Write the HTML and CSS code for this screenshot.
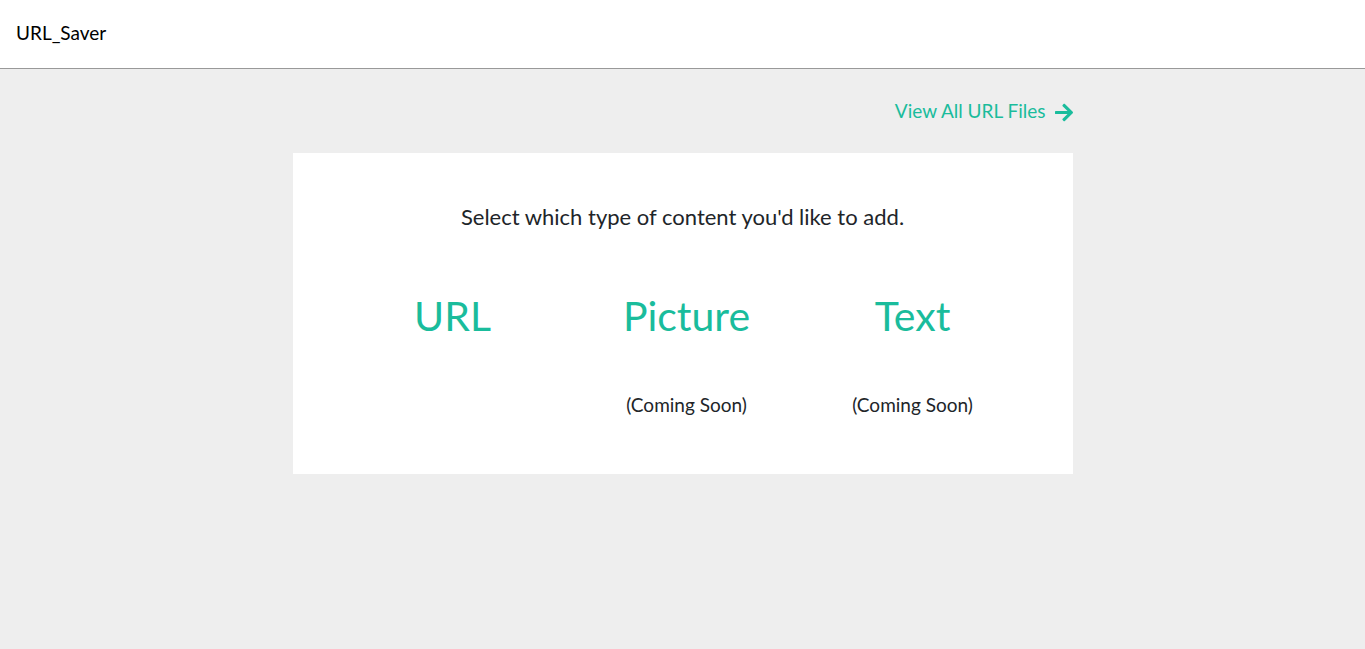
FILE: index.html
```html
<!DOCTYPE html>
<html lang="en">
<head>
<meta charset="utf-8">
<meta name="viewport" content="width=device-width, initial-scale=1">
<title>URL_Saver</title>
<link rel="stylesheet" href="styles.css">
</head>
<body>
<header class="header"><a class="brand" href="#">URL_Saver</a></header>
<main class="main">
  <nav class="top-nav">
    <a class="view-all" href="#files">View All URL Files
      <svg class="arrow" viewBox="0 0 448 512" aria-hidden="true"><path fill="currentColor" d="M190.500 66.900l22.200-22.200c9.400-9.400 24.600-9.400 33.900 0L441 239c9.400 9.400 9.400 24.600 0 33.900L246.600 467.300c-9.400 9.400-24.600 9.400-33.900 0l-22.200-22.200c-9.500-9.500-9.300-25 .4-34.300L311.400 296H24c-13.300 0-24-10.700-24-24v-32c0-13.300 10.700-24 24-24h287.400L190.900 101.200c-9.800-9.300-10-24.800-.4-34.300z"/></svg>
    </a>
  </nav>
  <section class="card">
    <h1 class="prompt">Select which type of content you'd like to add.</h1>
    <ul class="options">
      <li class="option"><a class="option-link" href="#url">URL</a></li>
      <li class="option"><a class="option-link" href="#picture">Picture</a><p class="note">(Coming Soon)</p></li>
      <li class="option"><a class="option-link" href="#text">Text</a><p class="note">(Coming Soon)</p></li>
    </ul>
  </section>
</main>
</body>
</html>
```
FILE: styles.css
```css
* {
  box-sizing: border-box;
}

body {
  margin: 0;
  min-height: 100vh;
  background: #eeeeee;
  color: #212529;
  font-family: Lato, sans-serif;
  font-size: 19px;
  line-height: 28px;
}

a {
  color: #1abc9c;
  text-decoration: none;
}

.header {
  padding: 19px 16px 21px;
  background: #ffffff;
  border-bottom: 1px solid #999999;
}

.header .brand {
  color: #000000;
}

.main {
  max-width: 780px;
  margin: 0 auto;
}

.top-nav {
  display: flex;
  justify-content: flex-end;
  padding: 28px 0;
}

.view-all {
  display: flex;
  align-items: center;
  gap: 9px;
}

.arrow {
  width: 18px;
  height: 21px;
  margin-top: 2px;
}

.card {
  padding: 48px 48px 55px 40px;
  background: #ffffff;
}

.prompt {
  margin: 0 0 0 8px;
  font-size: 22px;
  font-weight: 400;
  line-height: 32px;
  text-align: center;
}

.options {
  display: grid;
  grid-template-columns: 60fr 57fr 56fr;
  margin: 0;
  padding: 51px 0 0;
  list-style: none;
}

.option {
  text-align: center;
}

.option-link {
  display: block;
  font-size: 41px;
  line-height: 64px;
}

.note {
  margin: 43px 0 0;
}
```
